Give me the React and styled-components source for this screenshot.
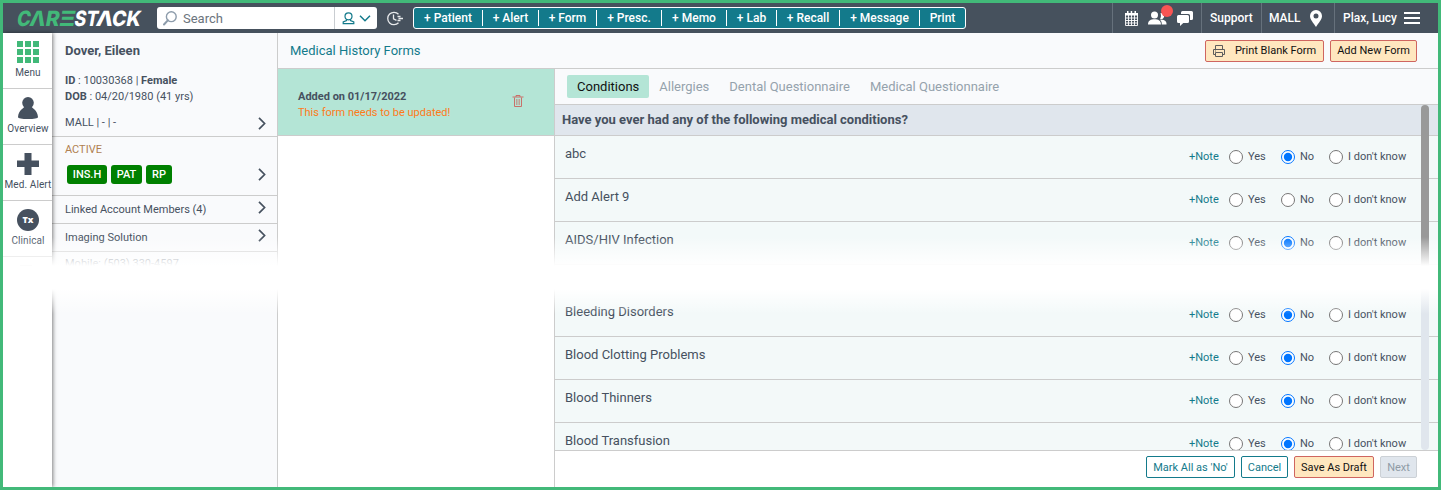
import React from 'react';
import styled, { createGlobalStyle, css } from 'styled-components';

const GlobalStyle = createGlobalStyle`
    * {
        box-sizing: border-box;
    }
    body {
        margin: 0;
        font-family: Roboto, "Liberation Sans", sans-serif;
        font-size: 11px;
        color: #46515f;
        background: #fff;
    }
    svg {
        display: block;
        flex: none;
    }
`;

const Frame = styled.div`
    position: relative;
    display: flex;
    flex-direction: column;
    width: 1441px;
    height: 490px;
    border: 3px solid #42b979;
    overflow: hidden;
`;

/* top bar */
const TopBar = styled.header`
    display: flex;
    align-items: center;
    flex: none;
    height: 30px;
    padding-left: 9px;
    background: #46515d;
    color: #fff;
`;
const Search = styled.div`
    display: flex;
    align-items: center;
    width: 220px;
    height: 22px;
    margin-left: 11px;
    padding-left: 6px;
    border-radius: 3px;
    background: #fff;
    color: #6b747d;
    font-size: 13px;
    span {
        flex: 1;
        padding-left: 6px;
    }
`;
const SearchScope = styled.div`
    display: flex;
    align-items: center;
    gap: 4px;
    width: 43px;
    height: 22px;
    padding-left: 7px;
    border-left: 1px solid #c9cdd1;
`;
const RecentIcon = styled.div`
    margin: 0 10px 0 9px;
`;
const QuickActions = styled.nav`
    display: flex;
    align-items: center;
    width: 553px;
    height: 22px;
    border: 1px solid #fff;
    border-radius: 3px;
    background: #137a8b;
`;
const QuickAction = styled.a`
    flex: ${({ $w }) => `0 0 ${$w}px`};
    height: 16px;
    border-right: ${({ $last }) => ($last ? 'none' : '1px solid #fff')};
    font-size: 12px;
    font-weight: 500;
    line-height: 16px;
    text-align: center;
    white-space: nowrap;
`;
const UserTools = styled.div`
    display: flex;
    height: 30px;
    margin-left: auto;
`;
const Tool = styled.div`
    display: flex;
    align-items: center;
    width: ${({ $w }) => $w}px;
    gap: ${({ $gap }) => $gap || 0}px;
    padding-left: ${({ $left }) => $left || 8}px;
    border-left: 1px solid #66717c;
    font-size: 12px;
    font-weight: 500;
    white-space: nowrap;
`;
const People = styled.div`
    position: relative;
`;
const Alert = styled.i`
    position: absolute;
    top: -6px;
    left: 13px;
    width: 12px;
    height: 12px;
    border-radius: 50%;
    background: #f95453;
`;

/* body */
const Body = styled.div`
    display: flex;
    flex: 1;
    min-height: 0;
`;
const SideBar = styled.aside`
    z-index: 1;
    flex: none;
    width: 49px;
    background: #fff;
    box-shadow: 1px 0 4px rgba(0, 0, 0, 0.5);
`;
const SideItem = styled.div`
    display: flex;
    flex-direction: column;
    align-items: center;
    height: 56px;
    padding: 8px 0 0 1px;
    border-bottom: 1px solid #ccc;
    font-size: 10px;
    line-height: 12px;
    letter-spacing: 0.1px;
    white-space: nowrap;
    svg {
        margin-bottom: 4px;
    }
    &:last-child {
        border-bottom: none;
    }
`;
const Patient = styled.section`
    flex: none;
    width: 226px;
    border-right: 1px solid #ccc;
    background: #f9fafc;
`;
const PatientBlock = styled.div`
    display: flex;
    align-items: ${({ $align }) => $align || 'center'};
    justify-content: space-between;
    height: ${({ $h }) => $h}px;
    padding: 0 11px 0 13px;
    border-bottom: 1px solid #ccc;
    line-height: 16px;
    p {
        margin: 0;
    }
    b {
        font-weight: 700;
    }
`;
const PatientName = styled.h3`
    margin: 0 0 14px;
    font-size: 13px;
    font-weight: 700;
    line-height: 16px;
`;
const Clinic = styled.p`
    && {
        margin-top: 10px;
    }
`;
const Status = styled.p`
    color: #b08050;
`;
const Badges = styled.div`
    display: flex;
    gap: 4px;
    margin: 7px 0 0 2px;
`;
const Badge = styled.span`
    width: ${({ $w }) => $w}px;
    height: 19px;
    border-radius: 3px;
    background: #008000;
    color: #fff;
    font-weight: 500;
    line-height: 19px;
    text-align: center;
`;
const ArrowSlot = styled.div`
    padding-bottom: ${({ $lift }) => $lift}px;
`;
const Mobile = styled.p`
    margin: 4px 13px;
    line-height: 16px;
`;

/* medical history */
const Main = styled.main`
    display: flex;
    flex: 1;
    flex-direction: column;
    min-width: 0;
`;
const TitleBar = styled.div`
    display: flex;
    align-items: center;
    flex: none;
    gap: 6px;
    height: 36px;
    padding: 0 21px 0 12px;
    border-bottom: 1px solid #ccc;
    background: #f9fafc;
    h2 {
        margin: 0 auto 0 0;
        color: #137a8b;
        font-size: 13px;
        font-weight: 400;
    }
`;
const buttonKinds = {
    warm: css`
        border-color: #cf6560;
        background: #ffe7bf;
        color: #111;
    `,
    outline: css`
        border-color: #137a8b;
        background: #fff;
        color: #137a8b;
    `,
    off: css`
        border-color: #ccd1d6;
        background: #e0e6ed;
        color: #8f9ba6;
    `,
};
const Button = styled.button`
    display: flex;
    align-items: center;
    justify-content: center;
    gap: 10px;
    width: ${({ $w }) => $w}px;
    height: 22px;
    padding: 0;
    border: 1px solid;
    border-radius: 2px;
    font: 400 11px Roboto, sans-serif;
    white-space: nowrap;
    ${({ $kind }) => buttonKinds[$kind]}
`;
const Columns = styled.div`
    display: flex;
    flex: 1;
    min-height: 0;
`;
const FormList = styled.div`
    flex: none;
    width: 277px;
    border-right: 1px solid #ccc;
    background: #fff;
`;
const FormItem = styled.div`
    display: flex;
    align-items: center;
    justify-content: space-between;
    height: 67px;
    padding: 5px 30px 0 20px;
    border-bottom: 1px solid #ccc;
    background: #b4e5d6;
    line-height: 16px;
    strong {
        display: block;
    }
    span {
        color: #ff7a1a;
    }
    svg {
        margin-bottom: 7px;
    }
`;
const Questionnaire = styled.div`
    display: flex;
    flex: 1;
    flex-direction: column;
    min-width: 0;
`;
const Tabs = styled.div`
    display: flex;
    align-items: center;
    flex: none;
    height: 36px;
    padding-left: 12px;
    border-bottom: 1px solid #ccc;
    background: #f9fafc;
`;
const Tab = styled.span`
    height: 23px;
    padding: 0 10px;
    border-radius: 2px;
    background: ${({ $active }) => ($active ? '#b4e5d6' : 'transparent')};
    color: ${({ $active }) => ($active ? '#111' : '#95a2ac')};
    font-size: 13px;
    line-height: 23px;
`;
const Questions = styled.div`
    position: relative;
    flex: 1;
    min-height: 0;
    overflow: hidden;
    background: #f3f9f9;
`;
const Heading = styled.div`
    height: 31px;
    padding-left: 7px;
    border-bottom: 1px solid #ccc;
    background: #e0e6ed;
    font-size: 13px;
    font-weight: 700;
    line-height: 29px;
`;
const Question = styled.div`
    display: grid;
    grid-template-columns: 1fr 40px 52px 48px 109px;
    height: 43px;
    padding-left: 10px;
    border-bottom: 1px solid #ccc;
`;
const QuestionName = styled.div`
    font-size: 13px;
    line-height: 35px;
`;
const AddNote = styled.a`
    color: #137a8b;
    line-height: 41px;
`;
const Option = styled.label`
    display: flex;
    align-items: center;
    gap: 5px;
    height: 40px;
    white-space: nowrap;
    input {
        width: 14px;
        height: 14px;
        margin: 2px 0 0;
    }
`;
const Omitted = styled.div`
    height: 29px;
`;
const ScrollTrack = styled.div`
    position: absolute;
    top: 0;
    right: 9px;
    width: 8px;
    height: 100%;
    border-radius: 4px;
    background: #e0e6ed;
`;
const ScrollThumb = styled.div`
    height: 170px;
    border-radius: 4px;
    background: #999;
`;
const Footer = styled.footer`
    display: flex;
    justify-content: flex-end;
    flex: none;
    gap: 6px;
    height: 37px;
    padding: 5px 21px 0 0;
    border-top: 1px solid #ccc;
    background: #fff;
`;

/* white band that cuts the page in two */
const Fade = styled.div`
    position: absolute;
    z-index: 2;
    top: 234px;
    left: 0;
    width: 100%;
    height: 77px;
    background: linear-gradient(rgba(255, 255, 255, 0), #fff 29px, #fff 52px, rgba(255, 255, 255, 0));
`;

const Logo = () => (
    <svg width="134" height="30" viewBox="0 0 134 30" fontFamily="Inter" fontWeight="800" fontSize="21" role="img" aria-label="CareStack">
        <g transform="translate(4 22.5) skewX(-10) scale(.99 1)">
            <g fill="#42b979">
                <text x="0" y="0" textLength="14" lengthAdjust="spacingAndGlyphs">C</text>
                <text x="13" y="0" textLength="16" lengthAdjust="spacingAndGlyphs">Λ</text>
                <text x="29" y="0" textLength="14" lengthAdjust="spacingAndGlyphs">R</text>
                <text x="43" y="0" textLength="16" lengthAdjust="spacingAndGlyphs">Ξ</text>
            </g>
            <g fill="#fff">
                <text x="58" y="0" textLength="24" lengthAdjust="spacingAndGlyphs">ST</text>
                <text x="80" y="0" textLength="17" lengthAdjust="spacingAndGlyphs">Λ</text>
                <text x="96" y="0" textLength="29" lengthAdjust="spacingAndGlyphs">CK</text>
            </g>
        </g>
    </svg>
);

const SearchIcon = () => (
    <svg width="14" height="15" viewBox="0 0 14 15" fill="none" stroke="#8d9cab">
        <circle cx="8.3" cy="5.7" r="4.9" strokeWidth="1.4" />
        <path d="M4.8 9.3 1 13.5" strokeWidth="2" strokeLinecap="round" />
    </svg>
);

const PersonIcon = () => (
    <svg width="13" height="13" viewBox="0 0 13 13" fill="none" stroke="#137a8b" strokeWidth="1.2">
        <circle cx="6.5" cy="4.3" r="3.5" />
        <path d="M4.5 7.3v1.2L1.2 10v1.7h10.6V10L8.5 8.5V7.3" />
    </svg>
);

const DownIcon = () => (
    <svg width="12" height="7" viewBox="0 0 12 7" fill="none" stroke="#137a8b" strokeWidth="1.5">
        <path d="m1 .8 5 5 5-5" />
    </svg>
);

const ClockIcon = () => (
    <svg width="17" height="15" viewBox="0 0 17 15" fill="none" stroke="#e8eaec" strokeWidth="1.3">
        <path d="M12.5 3.3a6.2 6.2 0 1 0 0 8.4M7.5 3.5v4.3l3 1.5M11.5 5.5h3M12.5 7.5H17M11.5 9.5h3" />
    </svg>
);

const CalendarIcon = () => (
    <svg width="13" height="15" viewBox="0 0 13 15">
        <path fill="#fff" d="M2 0h1.5v3H2zM5.7 0h1.5v3H5.7zM9.500 0H11v3H9.500zM0 2h13v2.500H0z" />
        <path fill="none" stroke="#fff" strokeWidth=".9" d="M.5 4v10.500h12V4M.5 7h12M.5 9.500h12M.5 12h12M3.500 4v10.500M6.500 4v10.500M9.500 4v10.500" />
    </svg>
);

const PeopleIcon = () => (
    <svg width="19" height="15" viewBox="0 0 19 15" fill="#fff">
        <circle cx="6.5" cy="4" r="3.5" />
        <path d="M0 13.5c0-4 2.8-5.3 6.5-5.3s6.5 1.3 6.5 5.3zM12.5 2.2a3 3 0 1 1-.4 5.7c1-1.7 1.2-3.8.4-5.7zM13.7 13.5H18.5c.4-3-1.8-4.8-5.3-4.7-.6 0-.9.1-1.2.2 1.4 1 1.9 2.5 1.7 4.5z" />
    </svg>
);

const ChatIcon = () => (
    <svg width="16" height="15" viewBox="0 0 16 15" fill="#fff">
        <path d="M5.5 0h9A1.5 1.5 0 0 1 16 1.5v6A1.5 1.5 0 0 1 14.5 9H13V4.5A1.5 1.5 0 0 0 11.5 3H4V1.5A1.5 1.5 0 0 1 5.5 0z" />
        <path d="M1.5 4h9A1.5 1.5 0 0 1 12 5.5v5a1.5 1.5 0 0 1-1.5 1.5H6.3L3 15v-3H1.5A1.5 1.5 0 0 1 0 10.5v-5A1.5 1.5 0 0 1 1.5 4z" />
    </svg>
);

const PinIcon = () => (
    <svg width="12" height="17" viewBox="0 0 12 17">
        <path fill="#fff" fillRule="evenodd" d="M6 0a6 6 0 0 1 6 6c0 3.5-3.5 7-6 11C3.5 13 0 9.5 0 6a6 6 0 0 1 6-6zm0 3.6a2.5 2.5 0 1 0 0 5 2.5 2.5 0 0 0 0-5z" />
    </svg>
);

const BurgerIcon = () => (
    <svg width="16" height="12" viewBox="0 0 16 12" fill="#fff">
        <path d="M0 0h16v2H0zM0 5h16v2H0zM0 10h16v2H0z" />
    </svg>
);

const GridIcon = () => (
    <svg width="22" height="22" viewBox="0 0 22 22" fill="#42b979">
        {[0, 8, 16].map((y) => [0, 8, 16].map((x) => <rect key={`${x}-${y}`} x={x} y={y} width="6" height="6" />))}
    </svg>
);

const PawnIcon = () => (
    <svg width="22" height="22" viewBox="0 0 22 22" fill="#46515f">
        <circle cx="11" cy="5.8" r="5.8" />
        <path d="M8 9h6c.5 2 6.5 3.5 7 11 0 1.500-4 2-10 2S1 21.500 1 20C1.500 12.500 7.500 11 8 9z" />
    </svg>
);

const PlusIcon = () => (
    <svg width="22" height="22" viewBox="0 0 22 22" fill="#46515f">
        <path d="M7.5 0h7v7.5H22V14h-7.5v8h-7v-8H0V7.500h7.500z" />
    </svg>
);

const TxIcon = () => (
    <svg width="22" height="22" viewBox="0 0 22 22">
        <circle cx="11" cy="11" r="11" fill="#46515f" />
        <text x="11" y="14.3" fill="#fff" fontFamily="Open Sans" fontWeight="800" fontSize="9" textAnchor="middle">Tx</text>
    </svg>
);

const ClipboardIcon = () => (
    <svg width="22" height="22" viewBox="0 0 22 22" fill="#46515f">
        <path d="M3 0h12v22H3z" />
    </svg>
);

const Arrow = () => (
    <svg width="8" height="13" viewBox="0 0 8 13" fill="none" stroke="#46515f" strokeWidth="1.7">
        <path d="m1 .8 5.6 5.7L1 12.2" />
    </svg>
);

const PrinterIcon = () => (
    <svg width="12" height="12" viewBox="0 0 12 12" fill="none" stroke="#5c5c5c">
        <path d="M2.5 4.5v-4h7v4M2.5 9.5h-2v-5h11v5h-2M2.5 7.5h7v4h-7zM2 6h1" />
    </svg>
);

const TrashIcon = () => (
    <svg width="12" height="12" viewBox="0 0 12 12" fill="none" stroke="#c9706a">
        <path d="M.5 2h11M4 2V.5h4V2M2.500 2.500v9h7v-9" />
        <path d="M4.5 4v6M6 4v6M7.5 4v6" strokeWidth=".6" />
    </svg>
);

const actions = [
    ['+ Patient', 69],
    ['+ Alert', 56],
    ['+ Form', 58],
    ['+ Presc.', 65],
    ['+ Memo', 65],
    ['+ Lab', 50],
    ['+ Recall', 63],
    ['+ Message', 80],
    ['Print', 45],
];

const sideItems = [
    ['Menu', GridIcon],
    ['Overview', PawnIcon],
    ['Med. Alert', PlusIcon],
    ['Clinical', TxIcon],
    ['', ClipboardIcon],
];

const tabs = ['Conditions', 'Allergies', 'Dental Questionnaire', 'Medical Questionnaire'];

const firstConditions = [
    { name: 'abc', answer: 'No' },
    { name: 'Add Alert 9', answer: null },
    { name: 'AIDS/HIV Infection', answer: 'No' },
];
const lastConditions = [
    { name: 'Bleeding Disorders', answer: 'No' },
    { name: 'Blood Clotting Problems', answer: 'No' },
    { name: 'Blood Thinners', answer: 'No' },
    { name: 'Blood Transfusion', answer: 'No' },
];

function Condition({ name, answer }) {
    return (
        <Question>
            <QuestionName>{name}</QuestionName>
            <AddNote>+Note</AddNote>
            {['Yes', 'No', "I don't know"].map((option) => (
                <Option key={option}>
                    <input type="radio" name={name} defaultChecked={answer === option} />
                    {option}
                </Option>
            ))}
        </Question>
    );
}

function Header() {
    return (
        <TopBar>
            <Logo />
            <Search>
                <SearchIcon />
                <span>Search</span>
                <SearchScope><PersonIcon /><DownIcon /></SearchScope>
            </Search>
            <RecentIcon><ClockIcon /></RecentIcon>
            <QuickActions>
                {actions.map(([label, w]) => (
                    <QuickAction key={label} $w={w} $last={label === 'Print'}>{label}</QuickAction>
                ))}
            </QuickActions>
            <UserTools>
                <Tool $w={89} $left={12} $gap={10}>
                    <CalendarIcon />
                    <People><PeopleIcon /><Alert /></People>
                    <ChatIcon />
                </Tool>
                <Tool $w={60}>Support</Tool>
                <Tool $w={73} $left={7} $gap={9}>MALL <PinIcon /></Tool>
                <Tool $w={104} $gap={7}>Plax, Lucy <BurgerIcon /></Tool>
            </UserTools>
        </TopBar>
    );
}

function PatientPanel() {
    return (
        <Patient>
            <PatientBlock $h={104} $align="flex-end">
                <div>
                    <PatientName>Dover, Eileen</PatientName>
                    <p><b>ID</b> : 10030368 | <b>Female</b></p>
                    <p><b>DOB</b> : 04/20/1980 (41 yrs)</p>
                    <Clinic>MALL | - | -</Clinic>
                    <ArrowSlot $lift={5} />
                </div>
                <ArrowSlot $lift={6}><Arrow /></ArrowSlot>
            </PatientBlock>
            <PatientBlock $h={59} $align="flex-end">
                <div>
                    <Status>ACTIVE</Status>
                    <Badges>
                        <Badge $w={40}>INS.H</Badge>
                        <Badge $w={31}>PAT</Badge>
                        <Badge $w={26}>RP</Badge>
                    </Badges>
                    <ArrowSlot $lift={11} />
                </div>
                <ArrowSlot $lift={14}><Arrow /></ArrowSlot>
            </PatientBlock>
            <PatientBlock $h={28}>
                <p>Linked Account Members (4)</p>
                <ArrowSlot $lift={4}><Arrow /></ArrowSlot>
            </PatientBlock>
            <PatientBlock $h={28}>
                <p>Imaging Solution</p>
                <ArrowSlot $lift={4}><Arrow /></ArrowSlot>
            </PatientBlock>
            <Mobile>Mobile: (503) 330-4597</Mobile>
        </Patient>
    );
}

function App() {
    return (
        <Frame>
            <GlobalStyle />
            <Header />
            <Body>
                <SideBar>
                    {sideItems.map(([label, Icon]) => (
                        <SideItem key={label}><Icon />{label}</SideItem>
                    ))}
                </SideBar>
                <PatientPanel />
                <Main>
                    <TitleBar>
                        <h2>Medical History Forms</h2>
                        <Button $kind="warm" $w={119}><PrinterIcon />Print Blank Form</Button>
                        <Button $kind="warm" $w={87}>Add New Form</Button>
                    </TitleBar>
                    <Columns>
                        <FormList>
                            <FormItem>
                                <div>
                                    <strong>Added on 01/17/2022</strong>
                                    <span>This form needs to be updated!</span>
                                </div>
                                <TrashIcon />
                            </FormItem>
                        </FormList>
                        <Questionnaire>
                            <Tabs>
                                {tabs.map((tab, i) => <Tab key={tab} $active={i === 0}>{tab}</Tab>)}
                            </Tabs>
                            <Questions>
                                <Heading>Have you ever had any of the following medical conditions?</Heading>
                                {firstConditions.map((c) => <Condition key={c.name} {...c} />)}
                                <Omitted />
                                {lastConditions.map((c) => <Condition key={c.name} {...c} />)}
                                <ScrollTrack><ScrollThumb /></ScrollTrack>
                            </Questions>
                            <Footer>
                                <Button $kind="outline" $w={89}>Mark All as 'No'</Button>
                                <Button $kind="outline" $w={47}>Cancel</Button>
                                <Button $kind="warm" $w={80}>Save As Draft</Button>
                                <Button $kind="off" $w={37}>Next</Button>
                            </Footer>
                        </Questionnaire>
                    </Columns>
                </Main>
            </Body>
            <Fade />
        </Frame>
    );
}

export default App;
